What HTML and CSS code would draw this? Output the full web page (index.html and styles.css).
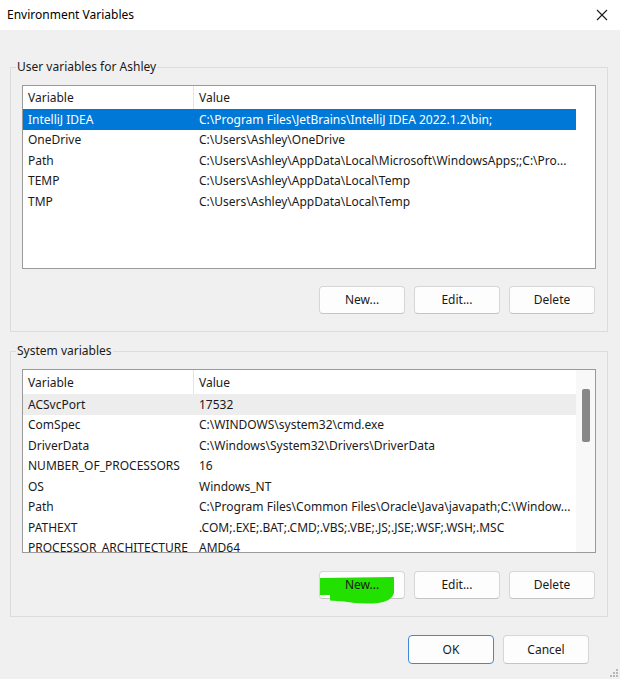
FILE: index.html
```html
<!DOCTYPE html>
<html>
<head>
<meta charset="utf-8">
<title>Environment Variables</title>
<link rel="stylesheet" href="styles.css">
</head>
<body>
<div class="window">
  <div class="titlebar">
    <span class="title">Environment Variables</span>
    <svg class="close" width="12" height="12" viewBox="0 0 12 12"><path d="M1 1 L11 11 M11 1 L1 11" stroke="#1a1a1a" stroke-width="1.1" fill="none"/></svg>
  </div>
  <div class="main">
    <fieldset class="group group-user">
      <legend>User variables for Ashley</legend>
      <div class="list list-user">
        <div class="list-body">
          <div class="row head"><div class="c1">Variable</div><div class="c2">Value</div></div>
          <div class="row sel"><div class="c1">IntelliJ IDEA</div><div class="c2">C:\Program Files\JetBrains\IntelliJ IDEA 2022.1.2\bin;</div></div>
          <div class="row"><div class="c1">OneDrive</div><div class="c2">C:\Users\Ashley\OneDrive</div></div>
          <div class="row"><div class="c1">Path</div><div class="c2">C:\Users\Ashley\AppData\Local\Microsoft\WindowsApps;;C:\Pro...</div></div>
          <div class="row"><div class="c1">TEMP</div><div class="c2">C:\Users\Ashley\AppData\Local\Temp</div></div>
          <div class="row"><div class="c1">TMP</div><div class="c2">C:\Users\Ashley\AppData\Local\Temp</div></div>
        </div>
        <div class="scroll-empty"></div>
      </div>
      <div class="buttons">
        <button class="btn">New...</button>
        <button class="btn">Edit...</button>
        <button class="btn">Delete</button>
      </div>
    </fieldset>
    <fieldset class="group group-system">
      <legend>System variables</legend>
      <div class="list list-system">
        <div class="list-body">
          <div class="row head"><div class="c1">Variable</div><div class="c2">Value</div></div>
          <div class="row hover"><div class="c1">ACSvcPort</div><div class="c2">17532</div></div>
          <div class="row"><div class="c1">ComSpec</div><div class="c2">C:\WINDOWS\system32\cmd.exe</div></div>
          <div class="row"><div class="c1">DriverData</div><div class="c2">C:\Windows\System32\Drivers\DriverData</div></div>
          <div class="row"><div class="c1">NUMBER_OF_PROCESSORS</div><div class="c2">16</div></div>
          <div class="row"><div class="c1">OS</div><div class="c2">Windows_NT</div></div>
          <div class="row"><div class="c1">Path</div><div class="c2">C:\Program Files\Common Files\Oracle\Java\javapath;C:\Window...</div></div>
          <div class="row"><div class="c1">PATHEXT</div><div class="c2">.COM;.EXE;.BAT;.CMD;.VBS;.VBE;.JS;.JSE;.WSF;.WSH;.MSC</div></div>
          <div class="row"><div class="c1">PROCESSOR_ARCHITECTURE</div><div class="c2">AMD64</div></div>
        </div>
        <div class="scrollbar"><div class="thumb"></div></div>
      </div>
      <div class="buttons">
        <button class="btn btn-marked">
          <svg class="marker" width="80" height="36" viewBox="0 0 80 36"><path d="M0 6 L74 5 L74 21 Q72 29 58 31 Q40 32.5 24 29.5 L10 28.5 L10 23 L0 23 Z" fill="#22e000"/></svg>
          <span class="btn-label">New...</span>
        </button>
        <button class="btn">Edit...</button>
        <button class="btn">Delete</button>
      </div>
    </fieldset>
    <div class="dialog-buttons">
      <button class="btn btn-default">OK</button>
      <button class="btn">Cancel</button>
    </div>
  </div>
  <svg class="grip" width="10" height="10" viewBox="0 0 10 10">
    <rect x="7" y="1" width="2" height="2" fill="#b8b8b8"/>
    <rect x="4" y="4" width="2" height="2" fill="#b8b8b8"/>
    <rect x="7" y="4" width="2" height="2" fill="#b8b8b8"/>
    <rect x="1" y="7" width="2" height="2" fill="#b8b8b8"/>
    <rect x="4" y="7" width="2" height="2" fill="#b8b8b8"/>
    <rect x="7" y="7" width="2" height="2" fill="#b8b8b8"/>
  </svg>
</div>
</body>
</html>
```
FILE: styles.css
```css
* { box-sizing: border-box; }
html, body { margin: 0; padding: 0; }
body {
  font-family: "Segoe UI", "Noto Sans", "Open Sans", sans-serif;
  font-size: 12px;
  color: #1a1a1a;
  background: #f0f0f0;
}
.window {
  position: relative;
  width: 620px;
  height: 679px;
  background: #f0f0f0;
  overflow: hidden;
}
.titlebar {
  height: 30px;
  background: #ffffff;
  display: flex;
  align-items: center;
  justify-content: space-between;
  padding: 0 12px 1px 7px;
}
.title { font-size: 12px; color: #000; }
.close { display: block; margin-top: 0; }

.main {
  padding: 0 12px 0 10px;
}
.group {
  margin: 0;
  border: 1px solid #dcdcdc;
  padding: 10px 11px 17px 11px;
  min-width: 0;
}
.group legend {
  padding: 0 1px;
  margin-left: -6px;
  line-height: 16px;
  color: #1a1a1a;
}
.group-user { margin-top: 29px; }
.group-system { margin-top: 11px; }

.list {
  display: flex;
  background: #fff;
  border: 1px solid #9a9a9a;
  overflow: hidden;
}
.list-user { height: 184px; }
.list-system { height: 184px; }
.list-body { flex: 1; min-width: 0; }
.scroll-empty { width: 19px; flex: none; }
.scrollbar {
  width: 19px;
  flex: none;
  background: #f8f8f8;
  position: relative;
  padding-top: 19px;
  display: flex;
  justify-content: center;
}
.thumb {
  width: 8px;
  height: 53px;
  background: #878787;
  border-radius: 2px;
}

.row {
  display: flex;
  height: 20.5px;
  align-items: center;
  white-space: nowrap;
}
.row.head { height: 23px; }
.list-system .row.head { height: 24px; }
.c1 {
  width: 170px;
  flex: none;
  padding-left: 5px;
  overflow: hidden;
}
.c2 {
  flex: 1;
  min-width: 0;
  padding-left: 5px;
  overflow: hidden;
}
.row.head .c2 {
  border-left: 1px solid #e5e5e5;
  align-self: stretch;
  display: flex;
  align-items: center;
}
.row .c2 { border-left: 1px solid transparent; }
.row.sel { background: #0078d7; color: #fff; }
.row.hover { background: #ededed; }

.buttons {
  display: flex;
  justify-content: flex-end;
  gap: 9px;
  margin-top: 17px;
  padding-right: 1px;
}
.group-system .buttons { margin-top: 18px; }
.btn {
  width: 86px;
  height: 28px;
  font-family: inherit;
  font-size: 12px;
  color: #1a1a1a;
  background: #fdfdfd;
  border: 1px solid #d6d6d6;
  border-bottom-color: #c4c4c4;
  border-radius: 4px;
  padding: 0;
  margin: 0;
  line-height: 1;
}
.btn-marked { position: relative; overflow: visible; }
.marker {
  position: absolute;
  left: 0;
  top: 0;
}
.btn-label { position: relative; }
.dialog-buttons {
  display: flex;
  justify-content: flex-end;
  gap: 9px;
  margin-top: 18px;
  padding-right: 19px;
}
.dialog-buttons .btn { height: 29px; }
.btn-default {
  border: 1px solid #3f8ad8;
}
.grip {
  position: absolute;
  right: 1px;
  bottom: 1px;
}
```
